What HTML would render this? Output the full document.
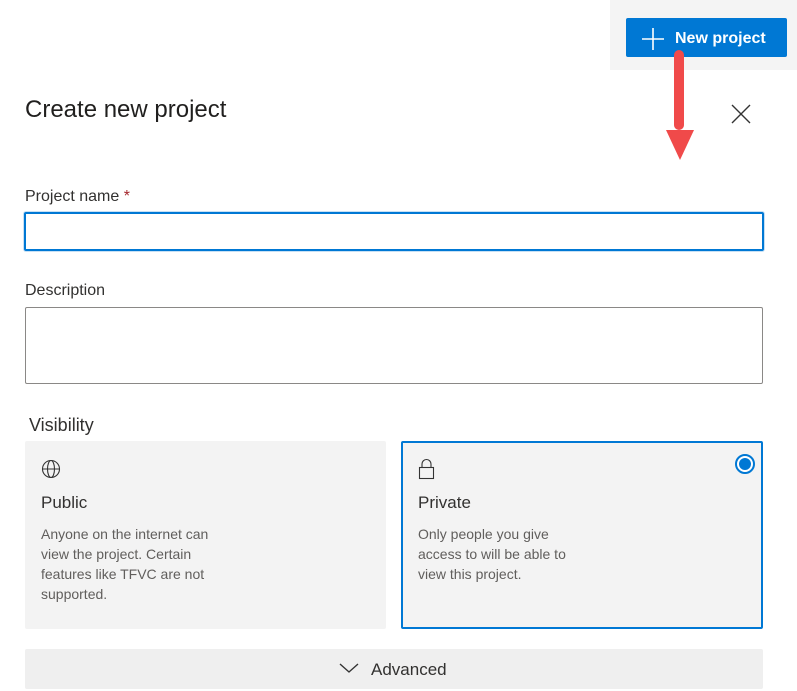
<!DOCTYPE html>
<html><head><meta charset="utf-8"><style>
*{box-sizing:border-box;margin:0;padding:0}
body{width:797px;height:691px;overflow:hidden;background:#fff;font-family:"Liberation Sans",sans-serif;color:#201f1e;position:relative}
.a{position:absolute;white-space:nowrap}
</style></head><body>
<div class="a" style="left:610px;top:0;width:187px;height:70px;background:#f4f4f4"></div>
<div class="a" style="left:626px;top:18px;width:161px;height:39px;background:#0078d4;border-radius:2px;color:#fff;font-weight:bold;font-size:16px;line-height:42px;padding-left:49px">New project</div>
<svg class="a" style="left:641px;top:27px" width="24" height="24"><path d="M12 1V23M1 12H23" stroke="#fff" stroke-width="1.6"/></svg>
<svg class="a" style="left:660px;top:45px" width="40" height="120"><rect x="14" y="5" width="10" height="80" rx="5" fill="#f04a4a"/><path d="M6 85H34L20 115Z" fill="#f04a4a"/></svg>
<div class="a" style="left:25px;top:96px;font-size:24px;color:#201f1e">Create new project</div>
<svg class="a" style="left:730px;top:103px" width="22" height="22"><path d="M2 2L20 20M20 2L2 20" stroke="#333" stroke-width="1.4"/></svg>
<div class="a" style="left:25px;top:188px;font-size:16px;color:#323130">Project name <span style="color:#a4262c">*</span></div>
<div class="a" style="left:24px;top:212px;width:740px;height:39px;border:2px solid #0078d4;border-radius:2px;box-shadow:0 0 0 1px #c7e0f4"></div>
<div class="a" style="left:25px;top:282px;font-size:16px;color:#323130">Description</div>
<div class="a" style="left:25px;top:307px;width:738px;height:77px;border:1px solid #8a8886;border-radius:2px"></div>
<div class="a" style="left:29px;top:415px;font-size:18px;color:#323130">Visibility</div>
<div class="a" style="left:25px;top:441px;width:361px;height:188px;background:#f3f3f3;border-radius:2px"></div>
<svg class="a" style="left:41px;top:459px" width="20" height="20" fill="none" stroke="#333" stroke-width="1.1"><circle cx="10" cy="10" r="8.5"/><ellipse cx="10" cy="10" rx="3.5" ry="8.5"/><path d="M1.5 10H18.5"/></svg>
<div class="a" style="left:41px;top:493px;font-size:17px;color:#323130">Public</div>
<div class="a" style="left:41px;top:524px;font-size:14px;line-height:20px;color:#605e5c">Anyone on the internet can<br>view the project. Certain<br>features like TFVC are not<br>supported.</div>
<div class="a" style="left:401px;top:441px;width:362px;height:188px;background:#f3f3f3;border:2px solid #0078d4;border-radius:2px"></div>
<svg class="a" style="left:417px;top:458px" width="20" height="22" fill="none" stroke="#333" stroke-width="1.1"><rect x="2.5" y="9.5" width="14" height="11"/><path d="M5 9.5V6a4.5 4.5 0 0 1 9 0V9.5"/></svg>
<div class="a" style="left:418px;top:493px;font-size:17px;color:#323130">Private</div>
<div class="a" style="left:418px;top:524px;font-size:14px;line-height:20px;color:#605e5c">Only people you give<br>access to will be able to<br>view this project.</div>
<div class="a" style="left:735px;top:454px;width:20px;height:20px;border-radius:50%;border:2px solid #0078d4;background:#fff"></div>
<div class="a" style="left:739px;top:458px;width:12px;height:12px;border-radius:50%;background:#0078d4"></div>
<div class="a" style="left:25px;top:649px;width:738px;height:40px;background:#efefef;border-radius:2px"></div>
<svg class="a" style="left:338px;top:661px" width="22" height="14"><path d="M2 3L11 11L20 3" fill="none" stroke="#333" stroke-width="1.4"/></svg>
<div class="a" style="left:371px;top:660px;font-size:17px;color:#323130">Advanced</div>
</body></html>
